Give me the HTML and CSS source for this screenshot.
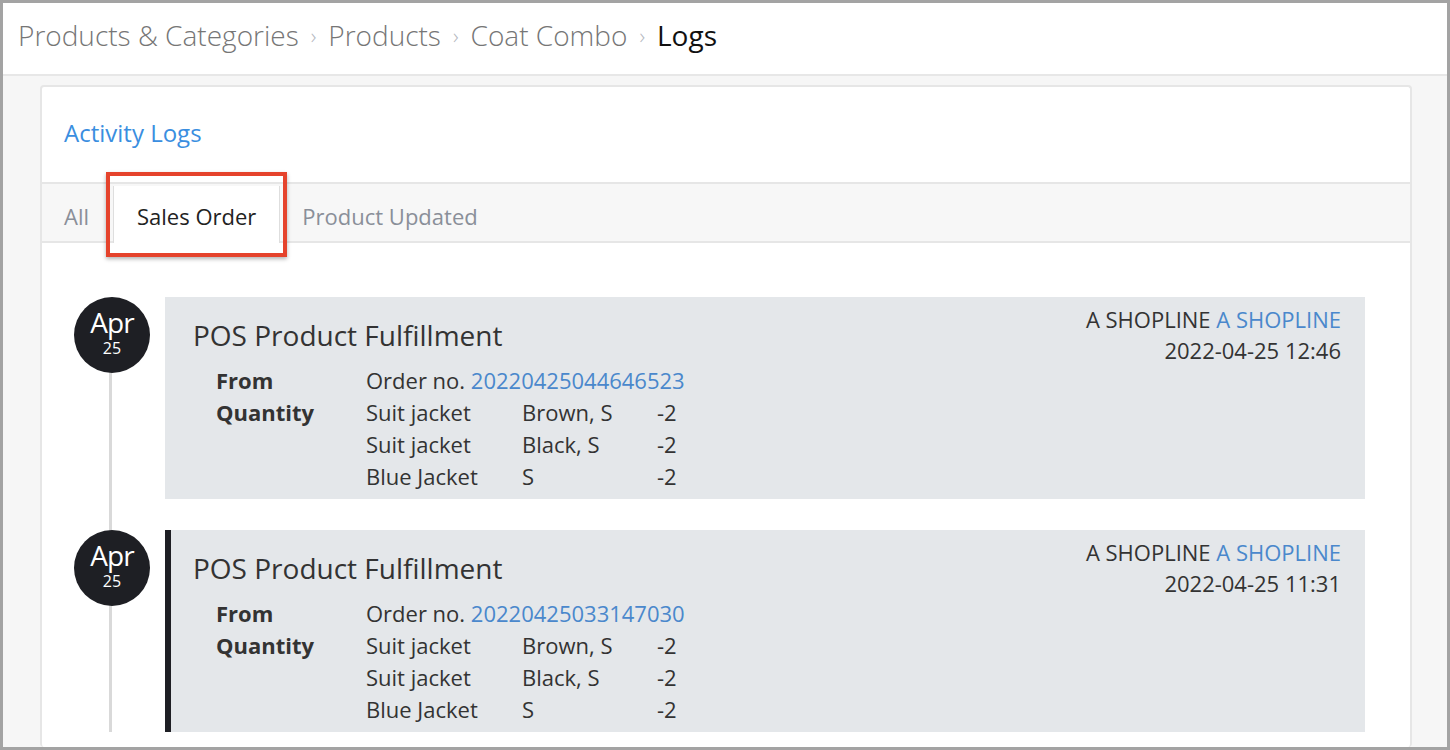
FILE: index.html
```html
<!DOCTYPE html>
<html>
<head>
<meta charset="utf-8">
<link rel="stylesheet" href="styles.css">
</head>
<body>
<div class="frame">
  <header class="topbar">
    <nav class="crumbs">
      <span class="crumb">Products &amp; Categories</span>
      <span class="sep">›</span>
      <span class="crumb">Products</span>
      <span class="sep">›</span>
      <span class="crumb">Coat Combo</span>
      <span class="sep">›</span>
      <span class="crumb current">Logs</span>
    </nav>
  </header>
  <main class="main">
    <section class="card">
      <div class="card-head">
        <h2 class="card-title">Activity Logs</h2>
      </div>
      <div class="tabs">
        <span class="tab">All</span>
        <span class="tab active">Sales Order<span class="highlight"></span></span>
        <span class="tab">Product Updated</span>
      </div>
      <div class="timeline">
        <div class="item">
          <div class="date"><span class="mon">Apr</span><span class="day">25</span></div>
          <div class="entry">
            <div class="entry-top">
              <h3 class="entry-title">POS Product Fulfillment</h3>
              <div class="meta">
                <div>A SHOPLINE <span class="link">A SHOPLINE</span></div>
                <div>2022-04-25 12:46</div>
              </div>
            </div>
            <div class="rows">
              <div class="lbl">From</div>
              <div class="val wide">Order no. <span class="link">20220425044646523</span></div>
              <div class="lbl">Quantity</div>
              <div class="val">Suit jacket</div><div class="val">Brown, S</div><div class="val">-2</div>
              <div class="lbl"></div>
              <div class="val">Suit jacket</div><div class="val">Black, S</div><div class="val">-2</div>
              <div class="lbl"></div>
              <div class="val">Blue Jacket</div><div class="val">S</div><div class="val">-2</div>
            </div>
          </div>
        </div>
        <div class="item">
          <div class="date"><span class="mon">Apr</span><span class="day">25</span></div>
          <div class="entry marked">
            <div class="entry-top">
              <h3 class="entry-title">POS Product Fulfillment</h3>
              <div class="meta">
                <div>A SHOPLINE <span class="link">A SHOPLINE</span></div>
                <div>2022-04-25 11:31</div>
              </div>
            </div>
            <div class="rows">
              <div class="lbl">From</div>
              <div class="val wide">Order no. <span class="link">20220425033147030</span></div>
              <div class="lbl">Quantity</div>
              <div class="val">Suit jacket</div><div class="val">Brown, S</div><div class="val">-2</div>
              <div class="lbl"></div>
              <div class="val">Suit jacket</div><div class="val">Black, S</div><div class="val">-2</div>
              <div class="lbl"></div>
              <div class="val">Blue Jacket</div><div class="val">S</div><div class="val">-2</div>
            </div>
          </div>
        </div>
      </div>
    </section>
  </main>
</div>
</body>
</html>
```
FILE: styles.css
```css
* { box-sizing: border-box; }
html, body { margin: 0; padding: 0; }
body {
  font-family: "Open Sans", "Liberation Sans", sans-serif;
  color: #333;
  background: #fff;
}
.frame {
  width: 1450px;
  height: 750px;
  border: 3px solid #a3a3a3;
  overflow: hidden;
  display: flex;
  flex-direction: column;
  background: #f6f6f6;
}
.topbar {
  height: 73px;
  flex: none;
  background: #fff;
  border-bottom: 2px solid #e7e7e7;
  display: flex;
  align-items: center;
  padding: 0 0 7px 15px;
}
.crumbs {
  display: flex;
  align-items: center;
  gap: 12px;
  font-size: 28px;
  font-weight: 300;
  color: #767676;
}
.sep { color: #b4b8c0; font-size: 22px; }
.crumb.current { color: #111; font-weight: 400; }
.main {
  flex: 1;
  padding: 9px 35px 0 37px;
  overflow: hidden;
}
.card {
  background: #fff;
  border: 2px solid #e6e6e6;
  border-radius: 4px;
  height: 100%;
  border-bottom: none;
}
.card-head {
  height: 95px;
  display: flex;
  align-items: center;
  padding: 0 0 4px 22px;
}
.card-title {
  margin: 0;
  font-size: 24px;
  font-weight: 400;
  color: #3a8ee0;
}
.tabs {
  height: 61px;
  background: #f7f7f7;
  border-top: 2px solid #e6e6e6;
  border-bottom: 2px solid #e6e6e6;
  display: flex;
  align-items: stretch;
}
.tab {
  padding: 6px 24px 0 22px;
  font-size: 22px;
  color: #8a8f99;
  display: flex;
  align-items: center;
}
.tab.active {
  position: relative;
  background: #fff;
  color: #222;
  margin-top: 2px;
  margin-bottom: -2px;
  padding: 4px 23px 2px 23px;
  border-left: 1px solid #dedede;
  border-right: 1px solid #dedede;
}
.highlight {
  position: absolute;
  top: -14px;
  left: -8px;
  right: -8px;
  bottom: -14px;
  border: 4px solid #e5432c;
  box-shadow: 0 2px 4px rgba(0, 0, 0, 0.3);
  pointer-events: none;
}
.timeline {
  position: relative;
  padding: 54px 45px 0 32px;
  display: flex;
  flex-direction: column;
  gap: 31px;
}
.timeline::before {
  content: "";
  position: absolute;
  left: 67px;
  top: 60px;
  bottom: 0;
  width: 3px;
  background: #d9d9d9;
}
.item {
  display: flex;
  gap: 15px;
  align-items: flex-start;
  position: relative;
}
.date {
  width: 76px;
  height: 76px;
  flex: none;
  border-radius: 50%;
  background: #1e1f24;
  color: #fff;
  display: flex;
  flex-direction: column;
  align-items: center;
  justify-content: center;
}
.mon { font-size: 28px; line-height: 26px; letter-spacing: -1px; margin-top: -5px; }
.day { font-size: 16px; line-height: 16px; margin-top: 5px; }
.entry {
  flex: 1;
  background: #e4e7ea;
  padding: 20px 24px 7px 28px;
}
.entry.marked {
  border-left: 6px solid #1e1f24;
  padding-left: 22px;
}
.entry-top {
  height: 36px;
  display: flex;
  justify-content: space-between;
  align-items: flex-start;
}
.entry-title {
  margin: 0;
  font-size: 28px;
  font-weight: 400;
  color: #333;
  line-height: 36px;
}
.meta {
  text-align: right;
  font-size: 22px;
  line-height: 31px;
  color: #333;
  margin-top: -13px;
}
.link { color: #4a88cc; }
.rows {
  display: grid;
  grid-template-columns: 150px 156px 135px auto;
  padding-left: 23px;
  margin-top: 11px;
  font-size: 22px;
  line-height: 32px;
  color: #333;
}
.lbl { font-weight: 700; color: #333; }
.val.wide { grid-column: 2 / 5; }
```
